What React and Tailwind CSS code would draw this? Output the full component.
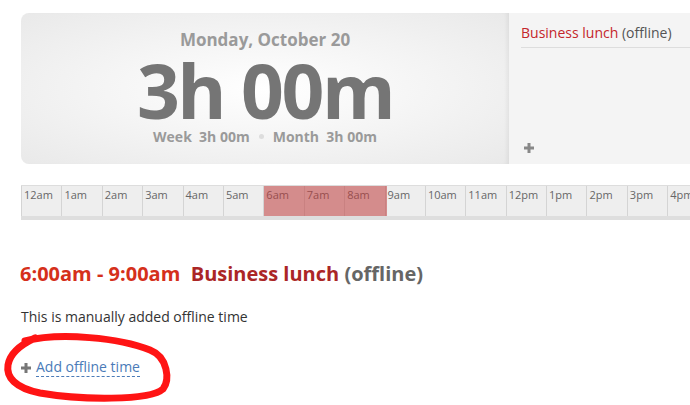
const hours = [
  "12am", "1am", "2am", "3am", "4am", "5am", "6am", "7am", "8am", "9am", "10am", "11am",
  "12pm", "1pm", "2pm", "3pm", "4pm", "5pm", "6pm", "7pm", "8pm", "9pm", "10pm", "11pm",
];

const Plus = ({ color }) => (
  <svg width="10" height="10" viewBox="0 0 10 10" className="shrink-0">
    <rect x="3.5" y="0" width="3" height="10" fill={color} />
    <rect x="0" y="3.5" width="10" height="3" fill={color} />
  </svg>
);

function Summary() {
  return (
    <div className="flex h-[151px] w-[669px] overflow-hidden rounded-l-lg">
      <div className="relative flex w-[488px] shrink-0 flex-col items-center bg-[radial-gradient(ellipse_at_center,#ffffff_0%,#f3f3f3_55%,#e9e9e9_100%)] pt-[16px] shadow-[inset_-4px_0_4px_-2px_rgba(0,0,0,0.06)]">
        <div className="text-[17px] font-bold leading-[22px] text-[#9a9a9a]">Monday, October 20</div>
        <div className="mt-[1px] text-[75px] font-bold leading-[76px] tracking-[-2.5px] text-[#757575]">3h 00m</div>
        <div className="flex items-center gap-[9px] text-[14px] font-bold leading-[17px] text-[#9a9a9a]">
          <span>Week&nbsp; 3h 00m</span>
          <span className="h-[5px] w-[5px] rounded-full bg-[#dddddd]" />
          <span>Month&nbsp; 3h 00m</span>
        </div>
      </div>
      <div className="flex flex-1 flex-col bg-[#f4f4f4] pl-[12px]">
        <div className="border-b border-[#dddddd] pt-[10px] pb-[5px] text-[14px] leading-[19px]">
          <span className="text-[#c4262b]">Business lunch</span>{" "}
          <span className="text-[#555555]">(offline)</span>
        </div>
        <div className="flex-1" />
        <div className="pb-[11px] pl-[3px]">
          <Plus color="#888888" />
        </div>
      </div>
    </div>
  );
}

function Timeline() {
  return (
    <div className="relative mt-[21px] w-[970px] border-t border-[#dddddd] bg-[#dedede] pb-[4px]">
      <div className="flex bg-[#eeeeee]">
        {hours.map((h) => (
          <div
            key={h}
            className="h-[30px] w-[40.4px] shrink-0 border-l border-[#d4d4d4] pl-[2px] pt-[1px] text-[11px] leading-[16px] text-[#666666]"
          >
            {h}
          </div>
        ))}
      </div>
      <div className="absolute top-0 left-[242.5px] h-[30px] w-[123px] bg-[#bf3c3c]/55" />
    </div>
  );
}

export default function App() {
  return (
    <div className="relative h-[405px] w-[690px] overflow-hidden bg-white font-['Open_Sans',sans-serif]">
      <div className="pl-[21px] pt-[13px]">
        <Summary />
        <Timeline />
      </div>
      <div className="mt-[40px] pl-[20px] text-[20px] font-bold leading-[28px]">
        <span className="text-[#d5301b]">6:00am - 9:00am</span>
        <span className="text-[#ab2626]">&nbsp; Business lunch</span>{" "}
        <span className="text-[#666666]">(offline)</span>
      </div>
      <p className="mt-[19px] pl-[21px] text-[14px] leading-[20px] text-[#333333]">This is manually added offline time</p>
      <div className="mt-[31px] flex items-center gap-[5px] pl-[21px] text-[14px] leading-[20px]">
        <Plus color="#777777" />
        <span className="border-b border-dashed border-[#4a7bb8] leading-[18px] text-[#4a7bb8]">Add offline time</span>
      </div>
      <svg className="absolute left-0 top-[325px] h-[80px] w-[180px]" viewBox="0 0 180 80" fill="none">
        <path
          d="M25,16 C60,7 120,13 150,25 C168,32 170,55 163,64 C150,76 80,75 40,68 C15,63 6,52 8,40 C10,28 20,20 35,13"
          stroke="#ff1414"
          strokeWidth="7"
          strokeLinecap="round"
          strokeLinejoin="round"
        />
      </svg>
    </div>
  );
}
